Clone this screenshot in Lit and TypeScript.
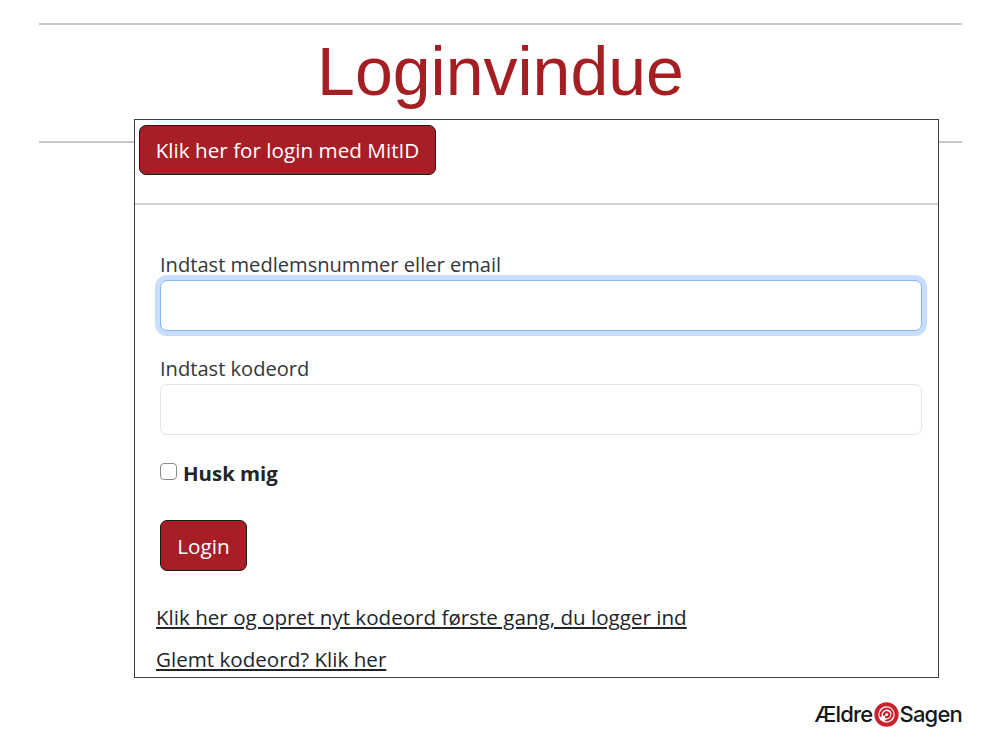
import { LitElement, html, css } from "lit";
import { customElement } from "lit/decorators.js";

@customElement("app-root")
export class AppRoot extends LitElement {
  static styles = css`
    :host {
      display: block;
      position: relative;
      width: 1000px;
      height: 750px;
      background: #fff;
      overflow: hidden;
      font-family: "Open Sans", "Noto Sans", sans-serif;
      color: #212529;
    }
    .slide {
      display: flex;
      flex-direction: column;
      height: 750px;
      box-sizing: border-box;
      padding: 23px 38px 0 39px;
    }
    .rule {
      height: 2px;
      background: #c9c9c9;
      flex: none;
    }
    h1 {
      margin: 0;
      height: 116px;
      font: 400 68px/92px "Liberation Sans", Arial, sans-serif;
      color: #a51e22;
      text-align: center;
      flex: none;
    }
    .logo {
      margin-top: auto;
      margin-bottom: 22px;
      display: flex;
      justify-content: flex-end;
      align-items: center;
      gap: 1px;
      font: 500 22px/28px Inter, "Open Sans", sans-serif;
      letter-spacing: -0.8px;
      color: #15171a;
    }
    .logo svg {
      width: 25px;
      height: 25px;
      display: block;
      flex: none;
    }
    .dialog {
      position: absolute;
      left: 134px;
      top: 119px;
      width: 805px;
      height: 559px;
      box-sizing: border-box;
      border: 1px solid #3f3f3f;
      background: #fff;
      overflow: hidden;
    }
    .head {
      height: 85px;
      box-sizing: border-box;
      padding: 5px 0 0 4px;
      border-bottom: 2px solid #d2d2d2;
    }
    button {
      display: block;
      box-sizing: border-box;
      background: #a81e27;
      color: #fff;
      border: 1px solid #1a1a1a;
      border-radius: 7px;
      font: 400 20.7px/26px "Open Sans", sans-serif;
      padding: 0;
      margin: 0;
    }
    .mitid {
      width: 297px;
      height: 50px;
    }
    .body {
      padding: 47px 16px 0 25px;
      display: flex;
      flex-direction: column;
    }
    label.field {
      font-size: 20.1px;
      line-height: 26px;
      color: #33373b;
      display: block;
    }
    .input {
      display: block;
      box-sizing: border-box;
      width: 762px;
      height: 51px;
      border: 1px solid #e2e4e7;
      border-radius: 7px;
      background: #fff;
      margin: 1px 0 0;
      padding: 0;
      outline: none;
    }
    .input.focus {
      margin-top: 2px;
      border-color: #86b7fe;
      box-shadow: 0 0 0 5px #c9defd;
    }
    .pw-label {
      margin-top: 25px;
      margin-bottom: 1px;
    }
    .check {
      display: flex;
      align-items: center;
      gap: 6px;
      margin-top: 25px;
      height: 26px;
      font-weight: 700;
      font-size: 20.4px;
      color: #212529;
    }
    .box {
      width: 17px;
      height: 17px;
      box-sizing: border-box;
      border: 1px solid #8a8a8a;
      border-radius: 4px;
      background: #fff;
      margin-top: -4px;
      flex: none;
    }
    .login {
      width: 87px;
      height: 51px;
      margin-top: 34px;
      padding-top: 1px;
    }
    .links {
      display: flex;
      flex-direction: column;
      gap: 16px;
      margin: 33px 0 0 -4px;
    }
    a {
      font-size: 20.6px;
      line-height: 26px;
      color: #212529;
      text-decoration: underline;
    }
  `;

  render() {
    return html`
      <div class="slide">
        <div class="rule"></div>
        <h1>Loginvindue</h1>
        <div class="rule"></div>
        <div class="logo">
          <span>Ældre</span>
          <svg viewBox="0 0 25 25" fill="none" stroke="#c8232c" aria-hidden="true">
            <circle cx="12.5" cy="12.5" r="10.2" stroke-width="4"></circle>
            <path d="M6.5 14C6 9.5 9.5 6.2 13.5 6.6C16.5 7 18.6 9.4 18.5 12C18.4 16 15.2 18.8 12 18.4" stroke-width="2" stroke-linecap="round"></path>
            <path d="M10 13C10 10.8 11.8 9.8 13.3 10.2C14.8 10.6 15.6 12 15.2 13.4C14.8 14.8 13.2 15.4 12 14.9" stroke-width="2.2" stroke-linecap="round"></path>
          </svg>
          <span>Sagen</span>
        </div>
      </div>
      <div class="dialog">
        <div class="head">
          <button class="mitid">Klik her for login med MitID</button>
        </div>
        <div class="body">
          <label class="field">Indtast medlemsnummer eller email</label>
          <div class="input focus"></div>
          <label class="field pw-label">Indtast kodeord</label>
          <div class="input"></div>
          <div class="check"><span class="box"></span><span>Husk mig</span></div>
          <button class="login">Login</button>
          <div class="links">
            <div><a href="#">Klik her og opret nyt kodeord første gang, du logger ind</a></div>
            <div><a href="#">Glemt kodeord? Klik her</a></div>
          </div>
        </div>
      </div>
    `;
  }
}
